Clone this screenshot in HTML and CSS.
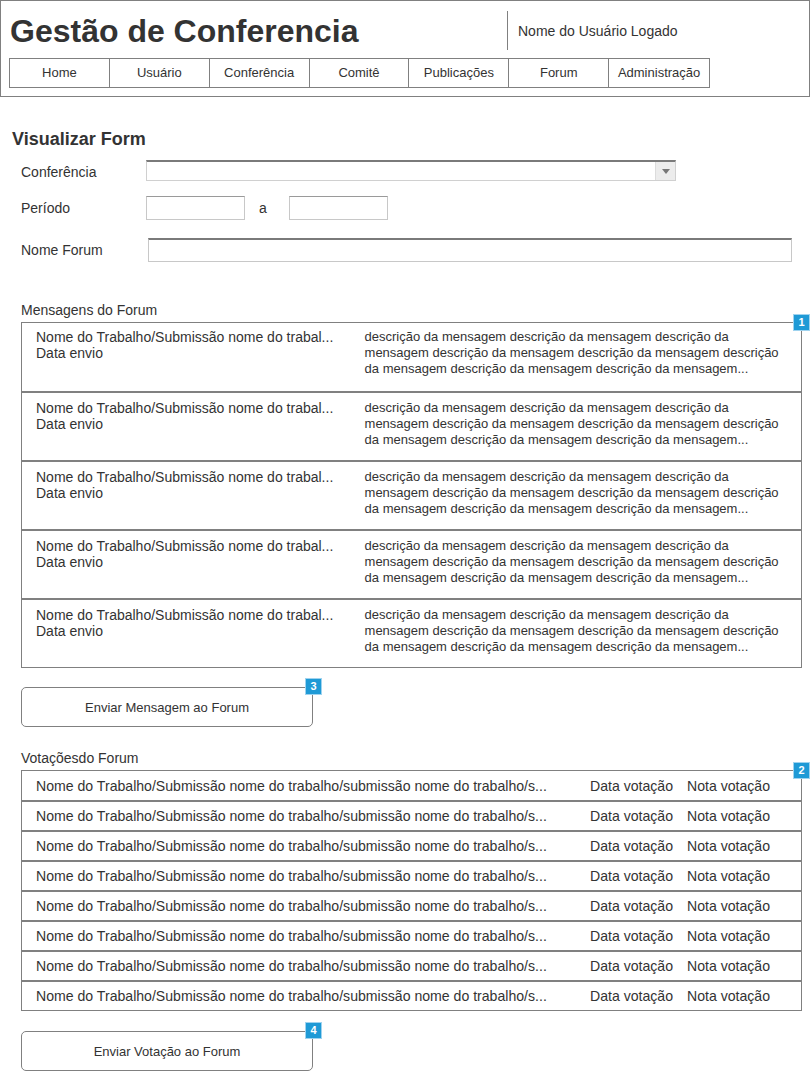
FILE: index.html
```html
<!DOCTYPE html>
<html lang="pt">
<head>
<meta charset="utf-8">
<title>Gestão de Conferencia</title>
<link rel="stylesheet" href="styles.css">
</head>
<body>
<header class="header">
  <div class="top">
    <h1 class="title">Gestão de Conferencia</h1>
    <div class="user">Nome do Usuário Logado</div>
  </div>
  <nav class="nav">
    <a>Home</a><a>Usuário</a><a>Conferência</a><a>Comitê</a><a>Publicações</a><a>Forum</a><a>Administração</a>
  </nav>
</header>
<main class="main">
  <h2 class="page-title">Visualizar Form</h2>
  <div class="form-row r1">
    <span class="label">Conferência</span>
    <div class="select"><span class="arrow"></span></div>
  </div>
  <div class="form-row r2">
    <span class="label">Período</span>
    <div class="input short"></div>
    <span class="sep">a</span>
    <div class="input short"></div>
  </div>
  <div class="form-row r3">
    <span class="label">Nome Forum</span>
    <div class="input long"></div>
  </div>

  <div class="section s1">
    <div class="section-title">Mensagens do Forum</div>
    <div class="list">
      <span class="badge">1</span>
      <div class="msg"><div class="msg-left">Nome do Trabalho/Submissão nome do trabal...<br>Data envio</div><div class="msg-right">descrição da mensagem descrição da mensagem descrição da mensagem descrição da mensagem descrição da mensagem descrição da mensagem descrição da mensagem descrição da mensagem...</div></div>
      <div class="msg"><div class="msg-left">Nome do Trabalho/Submissão nome do trabal...<br>Data envio</div><div class="msg-right">descrição da mensagem descrição da mensagem descrição da mensagem descrição da mensagem descrição da mensagem descrição da mensagem descrição da mensagem descrição da mensagem...</div></div>
      <div class="msg"><div class="msg-left">Nome do Trabalho/Submissão nome do trabal...<br>Data envio</div><div class="msg-right">descrição da mensagem descrição da mensagem descrição da mensagem descrição da mensagem descrição da mensagem descrição da mensagem descrição da mensagem descrição da mensagem...</div></div>
      <div class="msg"><div class="msg-left">Nome do Trabalho/Submissão nome do trabal...<br>Data envio</div><div class="msg-right">descrição da mensagem descrição da mensagem descrição da mensagem descrição da mensagem descrição da mensagem descrição da mensagem descrição da mensagem descrição da mensagem...</div></div>
      <div class="msg"><div class="msg-left">Nome do Trabalho/Submissão nome do trabal...<br>Data envio</div><div class="msg-right">descrição da mensagem descrição da mensagem descrição da mensagem descrição da mensagem descrição da mensagem descrição da mensagem descrição da mensagem descrição da mensagem...</div></div>
    </div>
  </div>
  <div class="btn-wrap b1"><button class="btn">Enviar Mensagem ao Forum</button><span class="badge">3</span></div>

  <div class="section s2">
    <div class="section-title">Votaçõesdo Forum</div>
    <div class="list">
      <span class="badge">2</span>
      <div class="vote"><span class="v-name">Nome do Trabalho/Submissão nome do trabalho/submissão nome do trabalho/s...</span><span class="v-date">Data votação</span><span class="v-nota">Nota votação</span></div>
      <div class="vote"><span class="v-name">Nome do Trabalho/Submissão nome do trabalho/submissão nome do trabalho/s...</span><span class="v-date">Data votação</span><span class="v-nota">Nota votação</span></div>
      <div class="vote"><span class="v-name">Nome do Trabalho/Submissão nome do trabalho/submissão nome do trabalho/s...</span><span class="v-date">Data votação</span><span class="v-nota">Nota votação</span></div>
      <div class="vote"><span class="v-name">Nome do Trabalho/Submissão nome do trabalho/submissão nome do trabalho/s...</span><span class="v-date">Data votação</span><span class="v-nota">Nota votação</span></div>
      <div class="vote"><span class="v-name">Nome do Trabalho/Submissão nome do trabalho/submissão nome do trabalho/s...</span><span class="v-date">Data votação</span><span class="v-nota">Nota votação</span></div>
      <div class="vote"><span class="v-name">Nome do Trabalho/Submissão nome do trabalho/submissão nome do trabalho/s...</span><span class="v-date">Data votação</span><span class="v-nota">Nota votação</span></div>
      <div class="vote"><span class="v-name">Nome do Trabalho/Submissão nome do trabalho/submissão nome do trabalho/s...</span><span class="v-date">Data votação</span><span class="v-nota">Nota votação</span></div>
      <div class="vote"><span class="v-name">Nome do Trabalho/Submissão nome do trabalho/submissão nome do trabalho/s...</span><span class="v-date">Data votação</span><span class="v-nota">Nota votação</span></div>
    </div>
  </div>
  <div class="btn-wrap b2"><button class="btn">Enviar Votação ao Forum</button><span class="badge">4</span></div>
</main>
</body>
</html>
```
FILE: styles.css
```css
* { box-sizing: border-box; }
body {
  margin: 0;
  font-family: "Liberation Sans", Arial, sans-serif;
  color: #333;
  font-size: 14px;
  background: #fff;
}
.header {
  width: 810px;
  height: 97px;
  border: 1px solid #808080;
  padding: 10px 8px 0 8px;
}
.top {
  display: flex;
  align-items: flex-start;
  height: 47px;
}
.title {
  margin: 0;
  width: 498px;
  font-size: 32px;
  font-weight: bold;
  line-height: 40px;
  padding-left: 1px;
  color: #333;
}
.user {
  border-left: 1px solid #808080;
  height: 39px;
  padding-left: 10px;
  line-height: 40px;
  font-size: 14px;
}
.nav {
  display: flex;
  width: 701px;
  height: 30px;
  border: 1px solid #808080;
}
.nav a {
  width: 100px;
  text-align: center;
  line-height: 28px;
  font-size: 13px;
  border-right: 1px solid #808080;
}
.nav a:last-child { border-right: none; }

.main { padding: 0 0 0 21px; }
.page-title {
  margin: 30px 0 0 -9px;
  font-size: 18px;
  line-height: 24px;
  font-weight: bold;
}
.form-row {
  display: flex;
  align-items: center;
  font-size: 14px;
}
.r1 { margin-top: 9px; height: 21px; }
.r2 { margin-top: 15px; height: 24px; }
.r3 { margin-top: 18px; height: 24px; }
.label { width: 125px; }
.r1 .label { padding-top: 3px; }
.r3 .label { width: 127px; }
.select {
  position: relative;
  width: 530px;
  height: 21px;
  border: 1px solid #d0d0d0;
  border-top: 2px solid #7a7a7a;
}
.arrow {
  position: absolute;
  right: 0;
  top: 0;
  width: 20px;
  height: 18px;
  background: #ececec;
  border-left: 1px solid #dcdcdc;
}
.arrow::after {
  content: "";
  position: absolute;
  left: 6px;
  top: 7px;
  border-left: 4px solid transparent;
  border-right: 4px solid transparent;
  border-top: 5px solid #777;
}
.input {
  height: 24px;
  border: 1px solid #c8c8c8;
  border-top: 1px solid #9a9a9a;
}
.short { width: 99px; }
.sep { width: 44px; text-align: left; padding-left: 14px; }
.long { width: 644px; border-top: 2px solid #7a7a7a; }

.section-title {
  font-size: 14px;
  line-height: 16px;
  margin-bottom: 4px;
}
.s1 { margin-top: 40px; }
.s2 { margin-top: 23px; }
.list {
  position: relative;
  width: 781px;
  border: 1px solid #808080;
}
.badge {
  position: absolute;
  right: -9px;
  top: -9px;
  width: 17px;
  height: 17px;
  background: #1f9ad6;
  border: 1px solid #9fd3ef;
  color: #fff;
  font-size: 11px;
  font-weight: bold;
  line-height: 15px;
  text-align: center;
}
.msg {
  display: flex;
  height: 69px;
  padding: 7px 15px 0 14px;
  line-height: 16px;
  border-top: 2px solid #808080;
}
.msg:first-of-type { border-top: none; height: 68px; padding-top: 6px; }
.msg-left { width: 329px; font-size: 14px; }
.msg-right { width: 422px; font-size: 13px; }
.vote {
  display: flex;
  height: 30px;
  align-items: center;
  padding-left: 14px;
  font-size: 14.1px;
  border-top: 2px solid #808080;
}
.vote:first-of-type { border-top: none; height: 29px; }
.v-name { width: 554px; }
.v-date { width: 97px; }
.btn-wrap {
  position: relative;
  width: 292px;
}
.b1 { margin-top: 19px; }
.b2 { margin-top: 20px; }
.btn {
  width: 292px;
  height: 40px;
  border: 1px solid #808080;
  border-radius: 5px;
  background: #fff;
  font-family: "Liberation Sans", Arial, sans-serif;
  font-size: 13px;
  color: #333;
}
```
